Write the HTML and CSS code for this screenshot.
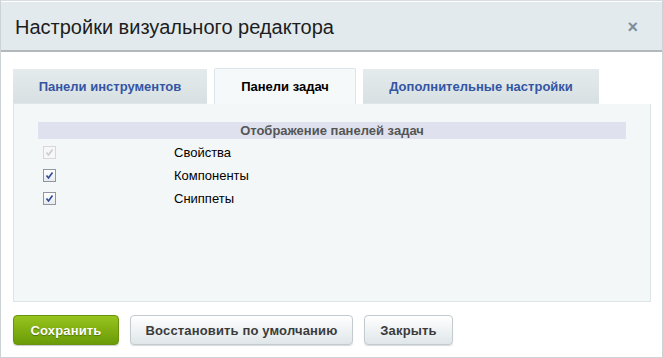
FILE: index.html
```html
<!DOCTYPE html>
<html>
<head>
    <meta charset="utf-8">
    <link rel="stylesheet" href="styles.css">
    <title>Настройки визуального редактора</title>
</head>
<body>
<div class="dialog">
    <div class="dialog-head">
        <span class="dialog-title">Настройки визуального редактора</span>
        <span class="dialog-close">&#215;</span>
    </div>

    <div class="dialog-body">
        <div class="tabs">
            <div class="tab tab-first">Панели инструментов</div>
            <div class="tab tab-active">Панели задач</div>
            <div class="tab tab-last">Дополнительные настройки</div>
        </div>

        <div class="tab-panel">
            <div class="section-title">Отображение панелей задач</div>
            <div class="opt-list">
                <div class="opt-row">
                    <span class="check check-disabled"><svg viewBox="0 0 11 11" width="11" height="11"><path d="M2.5 5.5 L4.5 8 L8.5 2.5" fill="none" stroke="currentColor" stroke-width="1.6"/></svg></span>
                    <span class="opt-label">Свойства</span>
                </div>
                <div class="opt-row">
                    <span class="check"><svg viewBox="0 0 11 11" width="11" height="11"><path d="M2.5 5.5 L4.5 8 L8.5 2.5" fill="none" stroke="currentColor" stroke-width="1.6"/></svg></span>
                    <span class="opt-label">Компоненты</span>
                </div>
                <div class="opt-row">
                    <span class="check"><svg viewBox="0 0 11 11" width="11" height="11"><path d="M2.5 5.5 L4.5 8 L8.5 2.5" fill="none" stroke="currentColor" stroke-width="1.6"/></svg></span>
                    <span class="opt-label">Сниппеты</span>
                </div>
            </div>
        </div>
    </div>

    <div class="dialog-buttons">
        <button class="btn btn-save">Сохранить</button>
        <button class="btn btn-restore">Восстановить по умолчанию</button>
        <button class="btn btn-close">Закрыть</button>
    </div>
</div>
</body>
</html>
```

FILE: styles.css
```css
body, html {
    margin: 0;
    padding: 0;
    height: 100%;
    background: #ffffff;
    font-family: "Liberation Sans", Arial, sans-serif;
}

.dialog {
    box-sizing: border-box;
    width: 663px;
    height: 358px;
    border: 1px solid #cdd2d5;
    border-top-color: #d7dcdf;
    background: #ffffff;
}

.dialog-head {
    height: 48px;
    margin-top: 1px;
    display: flex;
    align-items: center;
    justify-content: space-between;
    background: #e2eaed;
    border-bottom: 2px solid #b3b8bb;
    padding: 0 24px 0 14px;
}

.dialog-title {
    font-size: 20px;
    color: #1d1d1d;
    padding-top: 2px;
}

.dialog-close {
    font-size: 18px;
    font-weight: bold;
    color: #7f8c99;
    padding-top: 2px;
}

.dialog-body {
    padding: 17px 11px 0 12px;
}

.tabs {
    display: flex;
    align-items: flex-end;
    height: 35px;
}

.tab {
    box-sizing: border-box;
    height: 35px;
    display: flex;
    align-items: center;
    justify-content: center;
    font-size: 13px;
    font-weight: bold;
    color: #3455a4;
    background: linear-gradient(#e5ebed, #d7e0e2);
    border-bottom: 1px solid #dfe6ea;
}

.tab-first {
    width: 194px;
}

.tab-active {
    width: 142px;
    height: 36px;
    margin-left: 7px;
    color: #000000;
    background: #f5f9fa;
    border: 1px solid #dce6ea;
    border-bottom: none;
    border-radius: 2px 2px 0 0;
}

.tab-last {
    width: 236px;
    margin-left: 7px;
}

.tab-panel {
    box-sizing: border-box;
    width: 638px;
    height: 198px;
    background: #f4f7f8;
    border: 1px solid #dde5e9;
    border-top: none;
    padding: 18px 24px 0 24px;
}

.section-title {
    height: 17px;
    line-height: 17px;
    background: #dfe2ee;
    text-align: center;
    font-size: 13px;
    font-weight: bold;
    color: #555555;
}

.opt-list {
    padding-top: 2px;
}

.opt-row {
    display: grid;
    grid-template-columns: 136px 1fr;
    align-items: center;
    height: 23px;
    font-size: 13px;
    color: #000000;
}

.check {
    box-sizing: border-box;
    display: flex;
    align-items: center;
    justify-content: center;
    width: 13px;
    height: 13px;
    margin-left: 5px;
    border: 1px solid #8e97a3;
    background: linear-gradient(#ffffff, #e7eaef);
    color: #2c4a9a;
}

.check-disabled {
    border-color: #d6d9dc;
    background: #f7f7f7;
    color: #c9ccd0;
}

.dialog-buttons {
    display: flex;
    gap: 11px;
    padding: 13px 0 0 12px;
}

.btn {
    box-sizing: border-box;
    height: 30px;
    padding: 0;
    font-family: "Liberation Sans", Arial, sans-serif;
    font-size: 13px;
    font-weight: bold;
    letter-spacing: 0.15px;
    border-radius: 4px;
    cursor: pointer;
}

.btn-save {
    width: 106px;
    color: #ffffff;
    text-shadow: 0 1px 1px #4f7206;
    background: linear-gradient(#97c41d, #6b9b08);
    border: 1px solid #6a9210;
    box-shadow: 0 1px 1px rgba(0,0,0,0.2);
}

.btn-restore, .btn-close {
    color: #3b3b3b;
    background: linear-gradient(#ffffff, #dfe6e9);
    border: 1px solid #c3cbcf;
    box-shadow: 0 1px 1px rgba(0,0,0,0.15);
}

.btn-restore {
    width: 223px;
}

.btn-close {
    width: 89px;
}
```
